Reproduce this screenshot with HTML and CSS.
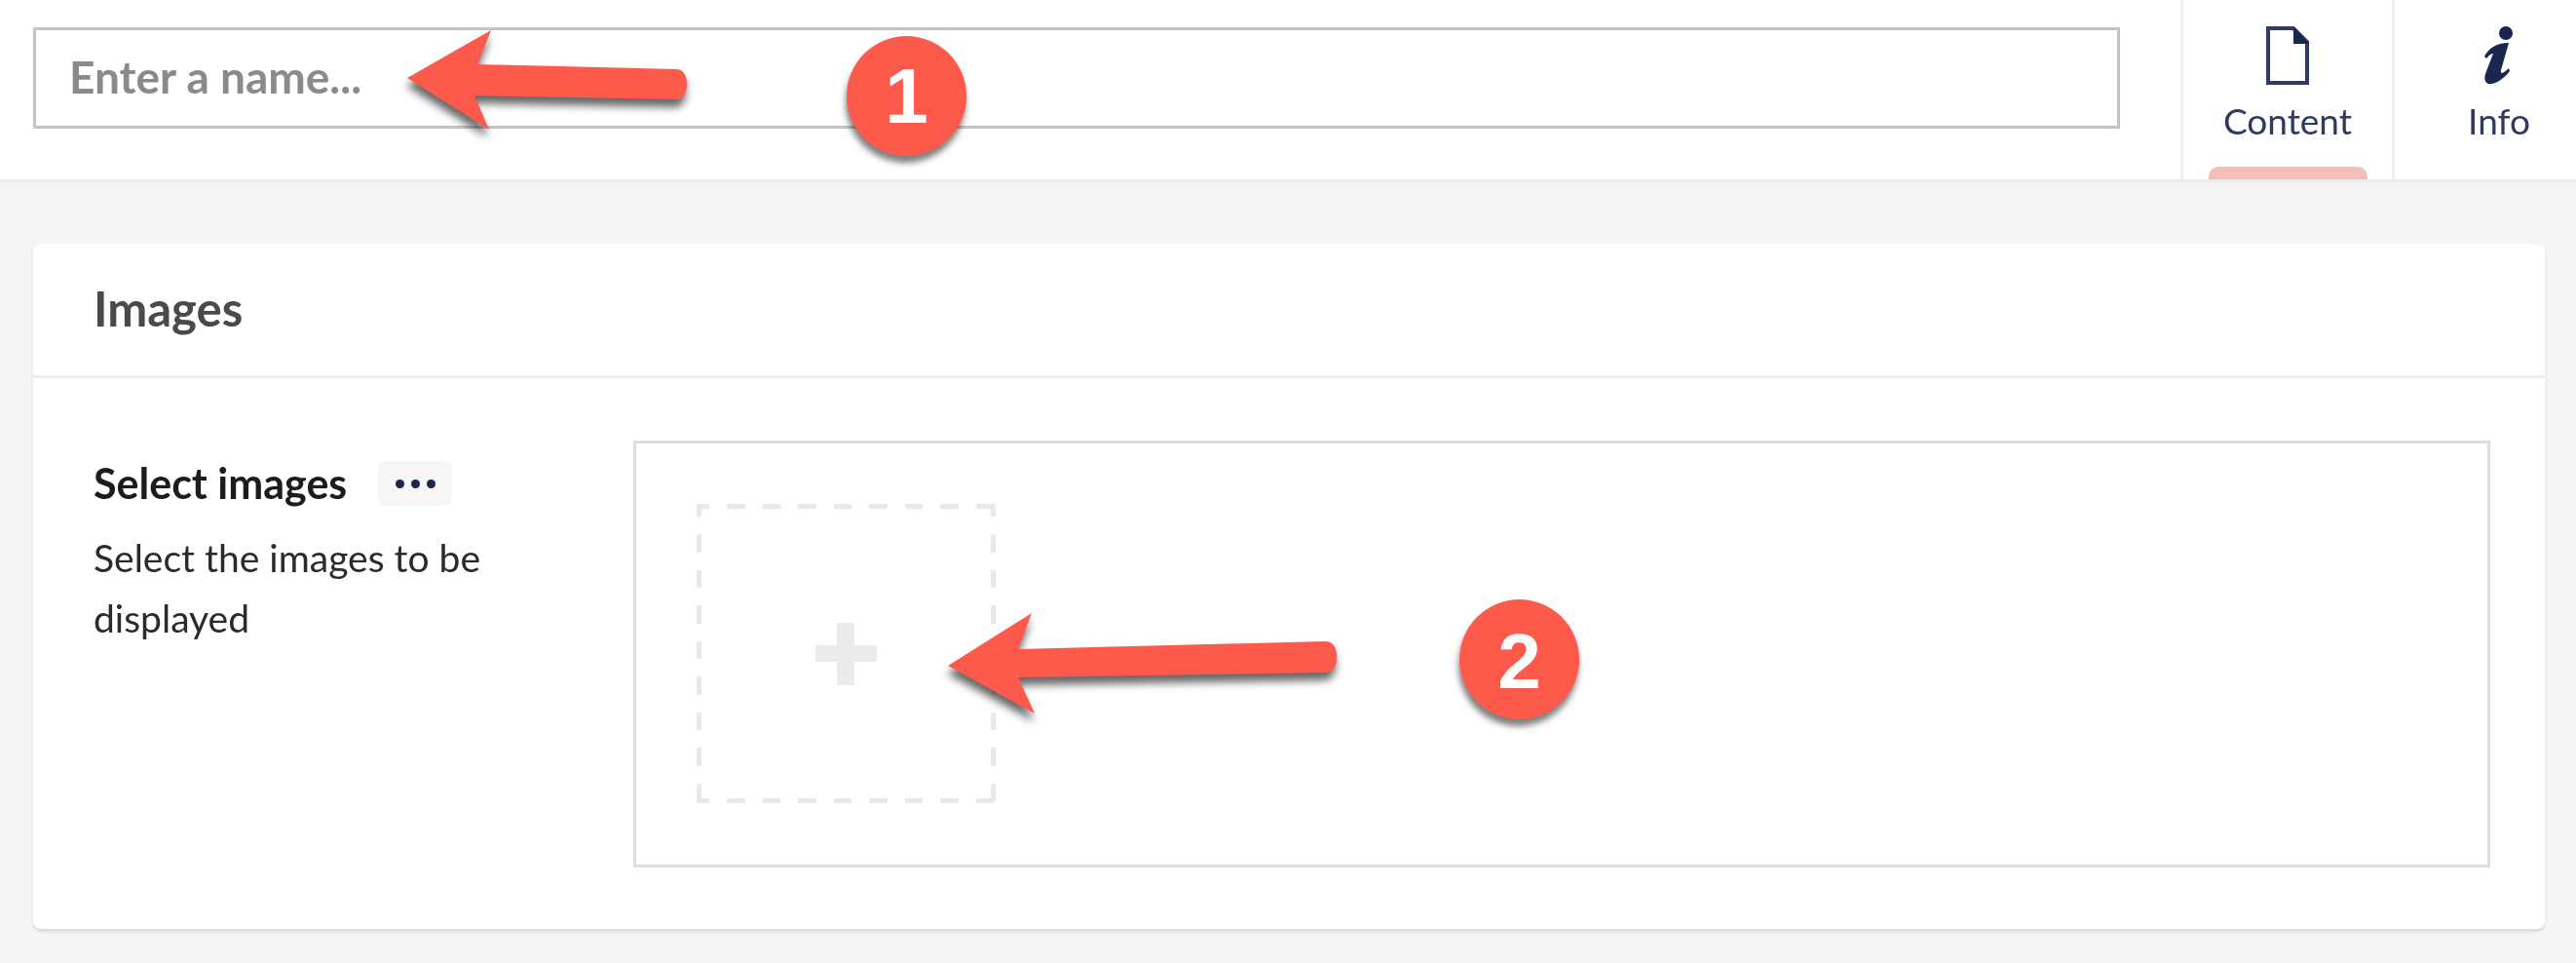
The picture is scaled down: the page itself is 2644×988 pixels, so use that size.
FILE: index.html
```html
<!DOCTYPE html>
<html lang="en">
<head>
<meta charset="utf-8">
<title>Images</title>
<link rel="stylesheet" href="styles.css">
</head>
<body>
<div class="page">
  <header class="topbar">
    <div class="name-wrap"><div class="name-input">Enter a name...</div></div>
    <nav class="tabs">
      <div class="tab tab-content">
        <svg class="tab-icon" width="46" height="62" viewBox="0 0 46 62"><path d="M3 3H29L43 17V59H3Z" fill="none" stroke="#2f3a66" stroke-width="4"/><path d="M29 2L44 17V19H29Z" fill="#1b264f"/></svg>
        <span class="tab-label">Content</span>
        <span class="tab-bar"></span>
      </div>
      <div class="tab tab-info">
        <svg class="tab-icon" width="32" height="62" viewBox="0 0 32 62"><circle cx="23" cy="8" r="7" fill="#1b264f"/><path d="M1 32C5 24 13 18 26 18L18 46C17 51 21 49 26 44L27 47C20 56 11 61 5 60C0 58 1 52 3 47L10 29C7 29 5 32 3 34Z" fill="#1b264f"/></svg>
        <span class="tab-label">Info</span>
      </div>
    </nav>
  </header>
  <main class="main">
    <section class="card">
      <h2 class="card-title">Images</h2>
      <div class="card-body">
        <div class="prop-label">
          <div class="prop-name"><span>Select images</span><span class="dots"><i></i><i></i><i></i></span></div>
          <p class="prop-desc">Select the images to be displayed</p>
        </div>
        <div class="prop-box">
          <div class="add-tile">
            <svg width="63" height="64" viewBox="0 0 63 64"><path d="M22 0H40V23H63V40H40V64H22V40H0V23H22Z" fill="#ebebed"/></svg>
          </div>
        </div>
      </div>
    </section>
  </main>
  <svg class="arrows" width="2644" height="988" viewBox="0 0 2644 988">
    <path d="M418 80L504 31L490 66L694 71C701 71 705 77 705 86C705 96 701 102 694 102L487 98L502 133Z" fill="#fe5a4b"/>
    <path d="M973 683L1059 629L1045 666L1360 658C1368 658 1372 664 1372 674C1372 684 1368 689 1360 690L1045 695L1062 732Z" fill="#fe5a4b"/>
  </svg>
  <div class="badge badge-one">1</div>
  <div class="badge badge-two">2</div>
</div>
</body>
</html>
```
FILE: styles.css
```css
* { box-sizing: border-box; }
html, body { margin: 0; padding: 0; }
body { font-family: Lato, "Liberation Sans", sans-serif; background: #f5f3f4; }
.page { position: relative; width: 2644px; height: 988px; overflow: hidden; filter: blur(.6px); background: #f5f3f4; }

.topbar { display: flex; height: 187px; background: #fff; border-bottom: 3px solid #ececec; }
.name-wrap { width: 2238px; padding: 28px 62px 0 34px; }
.name-input { height: 104px; border: 3px solid #c4c4c4; padding-left: 34px; font-size: 46px; line-height: 95px; font-weight: 700; color: #8a8a8a; }
.tabs { display: flex; flex: 1; }
.tab { display: flex; flex-direction: column; align-items: center; border-left: 3px solid #ececec; padding-top: 26px; }
.tab-content { width: 217px; }
.tab-info { flex: 1; padding-left: 28px; }
.tab-icon { display: block; }
.tab-label { margin-top: 14px; font-size: 37px; line-height: 44px; color: #303a5e; }
.tab-bar { margin-top: auto; width: 163px; height: 13px; border-radius: 10px 10px 0 0; background: #f5bfb9; }

.main { padding: 63px 32px 0 34px; }
.card { height: 703px; background: #fff; border-radius: 8px; box-shadow: 0 3px 3px rgba(0,0,0,.1); }
.card-title { margin: 0; height: 138px; padding: 28px 0 0 62px; border-bottom: 3px solid #ededed; font-size: 49px; line-height: 76px; font-weight: 700; color: #4a4a4a; }
.card-body { display: flex; padding: 64px 56px 0 62px; }
.prop-label { width: 554px; padding-top: 19px; }
.prop-name { display: flex; align-items: center; gap: 32px; font-size: 43px; line-height: 50px; font-weight: 700; color: #1c1c1c; }
.dots { display: flex; align-items: center; justify-content: center; gap: 7px; width: 76px; height: 46px; border-radius: 8px; background: #f7f6f5; }
.dots i { width: 9px; height: 9px; border-radius: 50%; background: #1b264f; }
.prop-desc { margin: 20px 0 0; width: 430px; font-size: 39px; line-height: 62px; color: #2b2b2b; }
.prop-box { flex: 1; height: 438px; border: 3px solid #dddddd; padding: 62px 0 0 62px; }
.add-tile {
  display: flex; align-items: center; justify-content: center; width: 307px; height: 307px;
  background:
    repeating-linear-gradient(90deg, #e9e9eb 0 13px, transparent 13px 31px, #e9e9eb 31px 36.56px) left top / 100% 5px no-repeat,
    repeating-linear-gradient(90deg, #e9e9eb 0 13px, transparent 13px 31px, #e9e9eb 31px 36.56px) left bottom / 100% 5px no-repeat,
    repeating-linear-gradient(180deg, #e9e9eb 0 13px, transparent 13px 31px, #e9e9eb 31px 36.56px) left top / 5px 100% no-repeat,
    repeating-linear-gradient(180deg, #e9e9eb 0 13px, transparent 13px 31px, #e9e9eb 31px 36.56px) right top / 5px 100% no-repeat;
}

.arrows { position: absolute; left: 0; top: 0; pointer-events: none; filter: drop-shadow(-1px 8px 4px rgba(0,0,0,.6)); }
.badge { position: absolute; display: flex; align-items: center; justify-content: center; width: 123px; height: 123px; border-radius: 50%; background: #fe5a4b; color: #fff; font-family: "Liberation Sans", Arial, sans-serif; font-size: 80px; font-weight: 700; box-shadow: -1px 7px 6px rgba(0,0,0,.5); }
.badge-one { left: 869px; top: 37px; }
.badge-two { left: 1498px; top: 615px; padding-top: 4px; }
```
